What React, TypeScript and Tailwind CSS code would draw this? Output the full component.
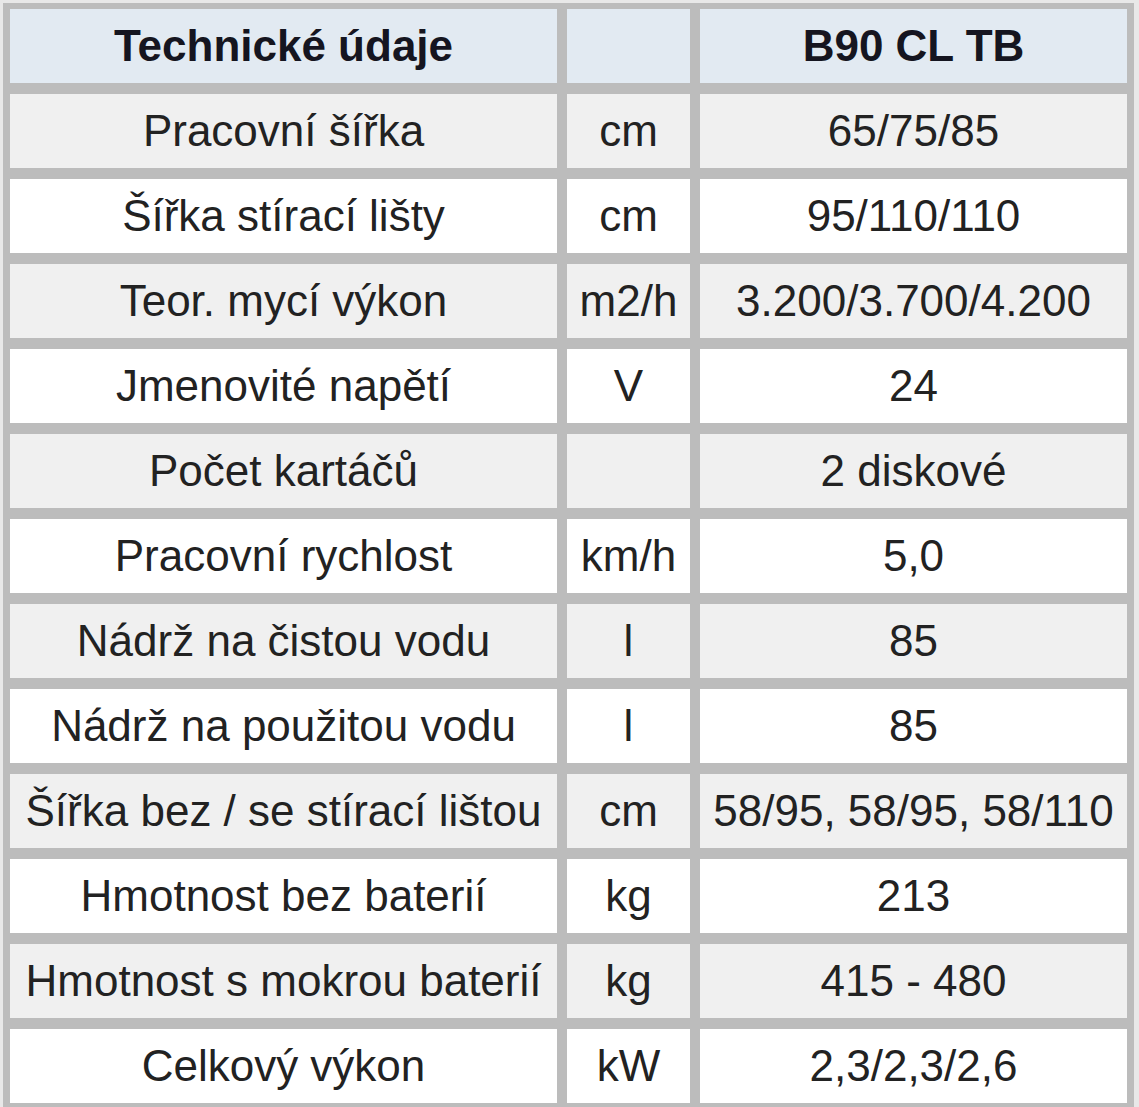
import React from 'react';

type Row = {
  label: string,
  unit: string,
  value: string
}

const rows: Row[] = [
  { label: 'Pracovní šířka', unit: 'cm', value: '65/75/85' },
  { label: 'Šířka stírací lišty', unit: 'cm', value: '95/110/110' },
  { label: 'Teor. mycí výkon', unit: 'm2/h', value: '3.200/3.700/4.200' },
  { label: 'Jmenovité napětí', unit: 'V', value: '24' },
  { label: 'Počet kartáčů', unit: '', value: '2 diskové' },
  { label: 'Pracovní rychlost', unit: 'km/h', value: '5,0' },
  { label: 'Nádrž na čistou vodu', unit: 'l', value: '85' },
  { label: 'Nádrž na použitou vodu', unit: 'l', value: '85' },
  { label: 'Šířka bez / se stírací lištou', unit: 'cm', value: '58/95, 58/95, 58/110' },
  { label: 'Hmotnost bez baterií', unit: 'kg', value: '213' },
  { label: 'Hmotnost s mokrou baterií', unit: 'kg', value: '415 - 480' },
  { label: 'Celkový výkon', unit: 'kW', value: '2,3/2,3/2,6' },
];

const cell = 'h-[74px] flex items-center justify-center whitespace-nowrap';

const App = () => {
  return (
    <div className="min-h-[1107px] bg-[#e8e8e8] pt-[3px] pl-[3px] font-['Liberation_Sans',Arial,sans-serif] text-[44px] leading-none text-[#222]">
      <div className="w-fit bg-[#bcbcbc] pt-[6px] pb-[4px] px-[7px] grid grid-cols-[547px_123px_427px] gap-x-[10px] gap-y-[11px]">
        <div className={`${cell} bg-[#e2eaf2] font-bold text-[#151520]`}>Technické údaje</div>
        <div className={`${cell} bg-[#e2eaf2]`}></div>
        <div className={`${cell} bg-[#e2eaf2] font-bold text-[#151520]`}>B90 CL TB</div>
        {rows.map((row, i) => {
          const bg = i % 2 === 0 ? 'bg-[#f0f0f0]' : 'bg-white';
          return (
            <React.Fragment key={row.label}>
              <div className={`${cell} ${bg}`}>{row.label}</div>
              <div className={`${cell} ${bg}`}>{row.unit}</div>
              <div className={`${cell} ${bg}`}>{row.value}</div>
            </React.Fragment>
          );
        })}
      </div>
    </div>
  );
}

export default App;
